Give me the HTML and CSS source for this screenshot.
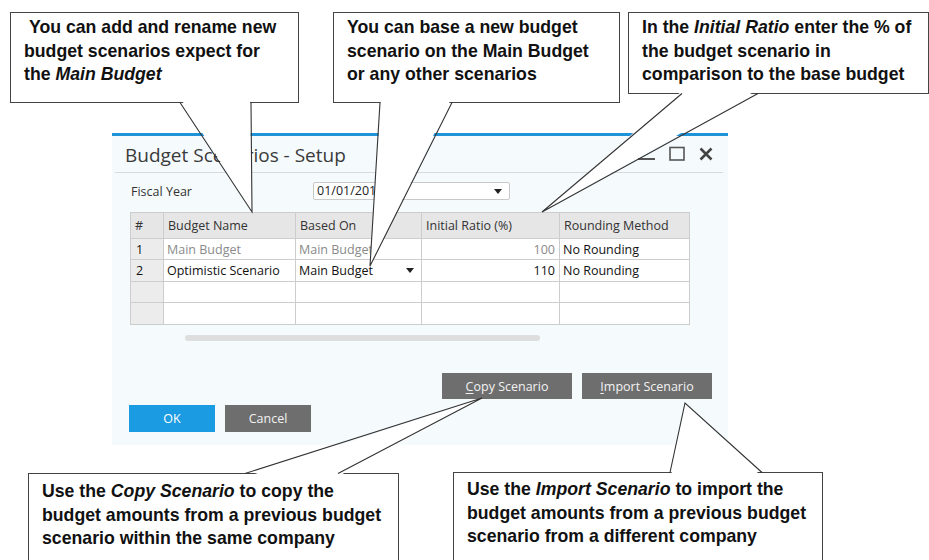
FILE: index.html
```html
<!DOCTYPE html>
<html>
<head>
<meta charset="utf-8">
<link rel="stylesheet" href="styles.css">
</head>
<body>
<div class="page">
  <div class="dialog">
    <div class="titlebar">
      <span class="title">Budget Scenarios - Setup</span>
      <div class="winbtns">
        <svg class="wb-min" width="17" height="16" viewBox="0 0 17 16"><line x1="0" y1="13" x2="17" y2="13" stroke="#555" stroke-width="2"/></svg>
        <svg class="wb-max" width="16" height="16" viewBox="0 0 16 16"><rect x="1" y="1.5" width="14" height="12.5" fill="none" stroke="#555" stroke-width="1.6"/></svg>
        <svg class="wb-close" width="14" height="16" viewBox="0 0 14 16"><path d="M1.5 2.5 L12.5 13.5 M12.5 2.5 L1.5 13.5" stroke="#444" stroke-width="2.6"/></svg>
      </div>
    </div>
    <div class="fy-row">
      <span class="fy-label">Fiscal Year</span>
      <div class="select">01/01/2016<span class="caret"></span></div>
    </div>
    <table class="grid">
      <colgroup><col class="c-num"><col class="c-name"><col class="c-base"><col class="c-ratio"><col class="c-round"></colgroup>
      <thead>
        <tr><th>#</th><th>Budget Name</th><th>Based On</th><th>Initial Ratio (%)</th><th>Rounding Method</th></tr>
      </thead>
      <tbody>
        <tr class="r-odd"><td class="num">1</td><td class="muted">Main Budget</td><td class="muted">Main Budget</td><td class="muted right">100</td><td>No Rounding</td></tr>
        <tr class="r-even"><td class="num">2</td><td>Optimistic Scenario</td><td class="drop">Main Budget<span class="caret"></span></td><td class="right">110</td><td>No Rounding</td></tr>
        <tr class="r-odd"><td class="num"></td><td></td><td></td><td></td><td></td></tr>
        <tr class="r-even"><td class="num"></td><td></td><td></td><td></td><td></td></tr>
      </tbody>
    </table>
    <div class="hscroll"></div>
    <div class="actions">
      <button class="btn gray wide"><u>C</u>opy Scenario</button>
      <button class="btn gray wide"><u>I</u>mport Scenario</button>
    </div>
    <div class="footer">
      <button class="btn blue">OK</button>
      <button class="btn gray">Cancel</button>
    </div>
  </div>

  <div class="callout co1">&nbsp;You can add and rename new<br>budget scenarios expect for<br>the <i>Main Budget</i></div>
  <div class="callout co2">You can base a new budget<br>scenario on the Main Budget<br>or any other scenarios</div>
  <div class="callout co3">In the <i>Initial Ratio</i> enter the % of<br>the budget scenario in<br>comparison to the base budget</div>
  <div class="callout co4">Use the <i>Copy Scenario</i> to copy the<br>budget amounts from a previous budget<br>scenario within the same company</div>
  <div class="callout co5">Use the <i>Import Scenario</i> to import the<br>budget amounts from a previous budget<br>scenario from a different company</div>

  <svg class="pointers" width="929" height="560" viewBox="0 0 929 560">
    <g fill="#fff" stroke="none">
      <polygon points="181,99 250,99 252,212"/>
      <polygon points="381,99 451,99 370,266"/>
      <polygon points="683,90 757,90 542,212"/>
      <polygon points="246,477 337,477 482,398"/>
      <polygon points="671,476 761,476 685,403"/>
    </g>
    <g fill="none" stroke="#333" stroke-width="1.1">
      <polyline points="180,102.5 252,212 251,102.5"/>
      <polyline points="380,102.5 370,266 452,102.5"/>
      <polyline points="682,93.5 542,212 758,93.5"/>
      <polyline points="245,473.5 482,398 338,473.5"/>
      <polyline points="670,472.5 685,403 762,472.5"/>
    </g>
  </svg>
</div>
</body>
</html>
```

FILE: styles.css
```css
html, body {
  margin: 0;
  padding: 0;
  background: #ffffff;
}

.page {
  position: relative;
  width: 929px;
  height: 560px;
  overflow: hidden;
  background: #ffffff;
}

/* ---------- dialog ---------- */
.dialog {
  margin: 133px 0 0 112px;
  width: 616px;
  height: 309px;
  background: #f5fbfd;
  border-top: 3px solid #1f93d8;
  font-family: "Open Sans", "Noto Sans", sans-serif;
  color: #222;
}

.titlebar {
  height: 36px;
  margin: 0 5px 0 3px;
  padding: 0 10px;
  border-bottom: 1px solid #dadada;
  display: flex;
  align-items: center;
  justify-content: space-between;
}

.title {
  font-size: 19px;
  color: #3a3a3a;
  margin-top: 1px;
}

.winbtns {
  display: flex;
  align-items: center;
  gap: 14px;
}

.wb-min, .wb-max, .wb-close { display: block; }

.fy-row {
  margin-top: 9px;
  padding-left: 19px;
  display: flex;
  align-items: center;
  height: 18px;
}

.fy-label {
  width: 182px;
  font-size: 12.5px;
  color: #333;
}

.select {
  position: relative;
  box-sizing: border-box;
  width: 197px;
  height: 18px;
  background: #fff;
  border: 1px solid #c9c9c9;
  border-radius: 2px;
  font-size: 12.5px;
  line-height: 16px;
  padding-left: 3px;
  color: #222;
}

.caret {
  position: absolute;
  right: 7px;
  top: 6px;
  width: 0;
  height: 0;
  border-left: 4.5px solid transparent;
  border-right: 4.5px solid transparent;
  border-top: 5px solid #222;
}

/* ---------- grid ---------- */
.grid {
  margin: 12px 0 0 18px;
  border-collapse: collapse;
  table-layout: fixed;
  width: 559px;
  font-size: 12.5px;
}

.c-num { width: 33px; }
.c-name { width: 132px; }
.c-base { width: 126px; }
.c-ratio { width: 138px; }
.c-round { width: 130px; }

.grid th, .grid td {
  border: 1px solid #cdcdcd;
  padding: 0 0 0 3px;
  text-align: left;
  font-weight: 400;
  white-space: nowrap;
  overflow: hidden;
}

.grid th {
  height: 25px;
  background: #e6e6e6;
  color: #333;
  padding-left: 4px;
}

.grid td {
  background: #ffffff;
  color: #111;
}

.grid tr.r-odd td { height: 20px; }
.grid tr.r-even td { height: 21px; }

.grid td.num {
  background: #ececec;
  padding-left: 5px;
}

.grid td.muted { color: #8a8a8a; }
.grid td.right { text-align: right; padding-right: 4px; }

.grid td.drop { position: relative; }
.grid td.drop .caret { right: 7px; top: 8px; }

.hscroll {
  margin: 10px 0 0 73px;
  width: 355px;
  height: 6px;
  border-radius: 3px;
  background: #dedede;
}

/* ---------- buttons ---------- */
.actions {
  margin-top: 32px;
  padding-right: 16px;
  display: flex;
  justify-content: flex-end;
  gap: 10px;
}

.footer {
  margin-top: 6px;
  padding-left: 17px;
  display: flex;
  gap: 10px;
}

.btn {
  border: none;
  margin: 0;
  padding: 0;
  font-family: "Open Sans", "Noto Sans", sans-serif;
  font-size: 12.5px;
  color: #f2f2f2;
  width: 86px;
  height: 27px;
  display: flex;
  align-items: center;
  justify-content: center;
}

.btn.wide {
  width: 130px;
  height: 26px;
}

.btn.gray { background: #6e6e6e; }
.btn.blue { background: #1b9be2; color: #fff; }

.btn u { text-underline-offset: 2px; }

/* ---------- callouts ---------- */
.callout {
  position: absolute;
  box-sizing: border-box;
  background: #ffffff;
  border: 1px solid #444;
  font-family: "Liberation Sans", Arial, sans-serif;
  font-weight: 700;
  font-size: 17.7px;
  line-height: 23.5px;
  color: #111;
  white-space: nowrap;
  padding: 3px 0 0 13px;
}

.callout i { font-style: italic; }

.co1 { left: 10px; top: 12px; width: 289px; height: 91px; padding-left: 13px; }
.co2 { left: 333px; top: 12px; width: 287px; height: 91px; }
.co3 { left: 628px; top: 12px; width: 301px; height: 82px; }
.co4 { left: 28px; top: 473px; width: 371px; height: 100px; padding-top: 6px; }
.co5 { left: 453px; top: 472px; width: 370px; height: 100px; padding-top: 5px; }

.pointers {
  position: absolute;
  left: 0;
  top: 0;
  pointer-events: none;
}
```
